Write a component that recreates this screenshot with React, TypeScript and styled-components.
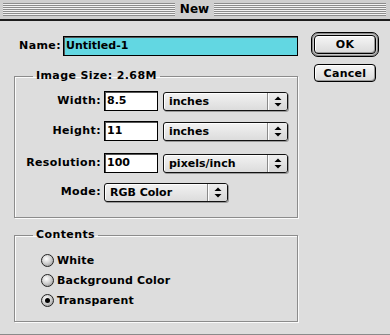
import React from "react";
import styled, { createGlobalStyle } from "styled-components";

const GlobalStyle = createGlobalStyle`
    html, body {
        margin: 0;
        padding: 0;
        background: #dddddd;
    }
    * {
        box-sizing: border-box;
    }
`;

const font = `"DejaVu Sans", Verdana, sans-serif`;

const Window = styled.div`
    width: 390px;
    height: 335px;
    display: flex;
    flex-direction: column;
    background: #dddddd;
    border-bottom: 1px solid #8a8a8a;
    font-family: ${font};
    font-size: 11px;
    font-weight: bold;
    color: #000;
`;

const TitleBar = styled.div`
    height: 21px;
    display: flex;
    align-items: center;
    gap: 4px;
    padding: 0 4px 1px 3px;
    background: #cfcfcf;
    border-bottom: 2px solid #1c1c1c;
`;

const Stripes = styled.div`
    flex: 1;
    height: 13px;
    background: repeating-linear-gradient(to bottom, #8c8c8c 0 1px, #f2f2f2 1px 2px);
`;

const Title = styled.span`
    font-size: 12px;
    line-height: 14px;
    padding: 0 1px;
`;

const Body = styled.div`
    flex: 1;
    display: flex;
    padding-left: 14px;
`;

const LeftColumn = styled.div`
    width: 284px;
    display: flex;
    flex-direction: column;
`;

const RightColumn = styled.div`
    margin-left: 13px;
    padding-top: 11px;
    display: flex;
    flex-direction: column;
    align-items: flex-start;
`;

const NameRow = styled.div`
    margin-top: 15px;
    display: flex;
    align-items: center;
    gap: 2px;
`;

const Label = styled.label<{ $width: number }>`
    width: ${(p) => p.$width}px;
    text-align: right;
    white-space: nowrap;
    line-height: 14px;
    letter-spacing: 0.4px;
`;

const TextBox = styled.div<{ $width: number; $ml?: number; $selected?: boolean }>`
    width: ${(p) => p.$width}px;
    height: 20px;
    margin-left: ${(p) => p.$ml ?? 0}px;
    display: flex;
    align-items: center;
    padding-left: 2px;
    border: 1px solid #000;
    box-shadow: inset 1px 1px 0 #555;
    background: ${(p) => (p.$selected ? "#62d7e2" : "#ffffff")};
    line-height: 14px;
`;

const Group = styled.fieldset<{ $top: number; $pad: string }>`
    margin: ${(p) => p.$top}px 0 0 0;
    padding: ${(p) => p.$pad};
    min-width: 0;
    border: 1px solid #8c8c8c;
    box-shadow: 1px 1px 0 #fbfbfb, inset 1px 1px 0 #fbfbfb;
`;

const Legend = styled.legend`
    margin-left: 18px;
    padding: 0 3px;
    line-height: 14px;
    letter-spacing: 0.4px;
`;

const FieldRow = styled.div<{ $mt: number }>`
    margin-top: ${(p) => p.$mt}px;
    height: 20px;
    display: flex;
    align-items: center;
`;

const Popup = styled.div<{ $width: number; $ml: number }>`
    width: ${(p) => p.$width}px;
    height: 19px;
    margin-left: ${(p) => p.$ml}px;
    display: flex;
    border: 1px solid #111;
    border-radius: 3px;
    background: linear-gradient(#f2f2f2, #dcdcdc);
    box-shadow: 1px 1px 0 #9a9a9a, inset 1px 1px 0 #ffffff;
    overflow: hidden;
`;

const PopupText = styled.span`
    flex: 1;
    padding-left: 5px;
    line-height: 17px;
`;

const PopupArrows = styled.span`
    width: 20px;
    border-left: 1px solid #8a8a8a;
    display: flex;
    align-items: center;
    justify-content: center;
    background: linear-gradient(#eeeeee, #d6d6d6);
    box-shadow: inset 1px 0 0 #ffffff;
`;

const RadioList = styled.div`
    display: flex;
    flex-direction: column;
    gap: 7px;
    padding-left: 26px;
`;

const RadioRow = styled.div`
    display: flex;
    align-items: center;
    gap: 3px;
    height: 13px;
    line-height: 14px;
    letter-spacing: 0.2px;
`;

const RadioDot = styled.span<{ $checked?: boolean }>`
    width: 13px;
    height: 13px;
    border-radius: 50%;
    border: 1px solid #222;
    background: radial-gradient(circle at 40% 35%, #ffffff 0, #d2d2d2 45%, #8a8a8a 100%);
    display: flex;
    align-items: center;
    justify-content: center;

    &::after {
        content: "";
        width: 5px;
        height: 5px;
        border-radius: 50%;
        background: #000;
        display: ${(p) => (p.$checked ? "block" : "none")};
    }
`;

const DefaultRing = styled.div`
    padding: 2px;
    border: 1px solid #000;
    border-radius: 7px;
    box-shadow: inset 0 0 0 1px #8a8a8a;
    background: #c8c8c8;
`;

const Button = styled.button<{ $height: number; $ml?: number }>`
    width: 62px;
    height: ${(p) => p.$height}px;
    margin-left: ${(p) => p.$ml ?? 0}px;
    padding: 0;
    border: 1px solid #000;
    border-radius: 4px;
    background: linear-gradient(#f6f6f6, #dadada);
    box-shadow: inset 1px 1px 0 #ffffff, inset -1px -1px 0 #9a9a9a;
    font-family: ${font};
    font-size: 11px;
    font-weight: bold;
    letter-spacing: 0.3px;
    color: #000;
`;

const CancelButton = styled(Button)`
    margin-top: 7px;
`;

const Arrows = () => (
    <svg width="8" height="11" viewBox="0 0 8 11">
        <path d="M4 0.5 L7.5 4 L0.5 4 Z" fill="#000" />
        <path d="M4 10.5 L7.5 7 L0.5 7 Z" fill="#000" />
    </svg>
);

interface SizeField {
    label: string;
    value: string;
    unit: string;
    mt: number;
}

const sizeFields: SizeField[] = [
    { label: "Width:", value: "8.5", unit: "inches", mt: 0 },
    { label: "Height:", value: "11", unit: "inches", mt: 10 },
    { label: "Resolution:", value: "100", unit: "pixels/inch", mt: 12 },
];

const contents = [
    { label: "White", checked: false },
    { label: "Background Color", checked: false },
    { label: "Transparent", checked: true },
];

const App = () => {
    return (
        <>
            <GlobalStyle />
            <Window>
                <TitleBar>
                    <Stripes />
                    <Title>New</Title>
                    <Stripes />
                </TitleBar>
                <Body>
                    <LeftColumn>
                        <NameRow>
                            <Label $width={47}>Name:</Label>
                            <TextBox $width={235} $selected>
                                Untitled-1
                            </TextBox>
                        </NameRow>

                        <Group $top={13} $pad="8px 0 15px 0">
                            <Legend>Image Size: 2.68M</Legend>
                            {sizeFields.map((f) => (
                                <FieldRow key={f.label} $mt={f.mt}>
                                    <Label $width={86}>{f.label}</Label>
                                    <TextBox $width={54} $ml={3}>
                                        {f.value}
                                    </TextBox>
                                    <Popup $width={125} $ml={5}>
                                        <PopupText>{f.unit}</PopupText>
                                        <PopupArrows>
                                            <Arrows />
                                        </PopupArrows>
                                    </Popup>
                                </FieldRow>
                            ))}
                            <FieldRow $mt={9}>
                                <Label $width={86}>Mode:</Label>
                                <Popup $width={124} $ml={3}>
                                    <PopupText>RGB Color</PopupText>
                                    <PopupArrows>
                                        <Arrows />
                                    </PopupArrows>
                                </Popup>
                            </FieldRow>
                        </Group>

                        <Group $top={10} $pad="12px 0 14px 0">
                            <Legend>Contents</Legend>
                            <RadioList>
                                {contents.map((c) => (
                                    <RadioRow key={c.label}>
                                        <RadioDot $checked={c.checked} />
                                        {c.label}
                                    </RadioRow>
                                ))}
                            </RadioList>
                        </Group>
                    </LeftColumn>

                    <RightColumn>
                        <DefaultRing>
                            <Button $height={19}>OK</Button>
                        </DefaultRing>
                        <CancelButton $height={18} $ml={3}>
                            Cancel
                        </CancelButton>
                    </RightColumn>
                </Body>
            </Window>
        </>
    );
};

export default App;
